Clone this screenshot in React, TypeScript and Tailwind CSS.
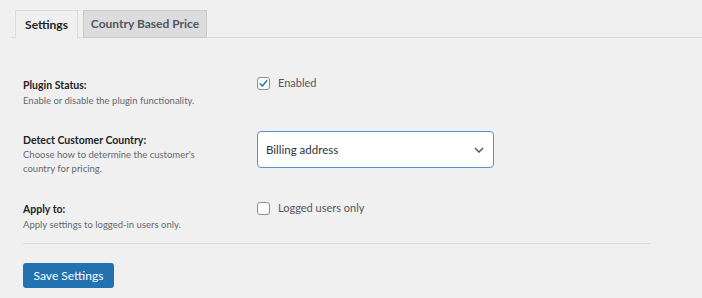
import React from "react";

function Check({ checked }: { checked?: boolean }) {
  return (
    <span className="relative flex h-[13px] w-[13px] shrink-0 items-center justify-center rounded-[3px] border border-[#8c8f94] bg-white">
      {checked && (
        <svg width="11" height="11" viewBox="0 0 20 20" className="absolute">
          <path d="M4 10.5 L8 14.5 L16 5" fill="none" stroke="#2271b1" strokeWidth="2.6" strokeLinecap="round" strokeLinejoin="round" />
        </svg>
      )}
    </span>
  );
}

export default function App() {
  return (
    <div
      className="w-[702px] h-[298px] overflow-hidden bg-[#f0f0f1] text-[#1d2327]"
      style={{ fontFamily: "Lato, 'Noto Sans', sans-serif" }}
    >
      <div className="ml-[11px] flex h-[38px] items-end gap-[5px] border-b border-[#dcdcde] pl-[4px]">
        <div className="-mb-px flex h-[28px] w-[63px] items-center justify-center border border-b-0 border-[#dcdcde] bg-[#f0f0f1] text-[12px] font-bold text-[#1d2327]">
          Settings
        </div>
        <div className="-mb-px flex h-[28px] w-[124px] items-center justify-center border border-[#c9c9cb] bg-[#dcdcde] text-[12px] font-bold text-[#50575e]">
          Country Based Price
        </div>
      </div>

      <div className="pl-[23px] pr-[51px]">
        <div className="mt-[39px] flex h-[54px]">
          <div className="w-[234px] shrink-0">
            <div className="text-[10.5px] font-bold leading-[16px]">Plugin Status:</div>
            <div className="text-[9.5px] leading-[15px] text-[#646970]">Enable or disable the plugin functionality.</div>
          </div>
          <div className="flex h-[13px] items-center gap-[8px]">
            <Check checked />
            <span className="text-[11px] text-[#50575e]">Enabled</span>
          </div>
        </div>

        <div className="flex h-[70px]">
          <div className="w-[234px] shrink-0 pt-[1px]">
            <div className="text-[10.5px] font-bold leading-[16px]">Detect Customer Country:</div>
            <div className="w-[180px] text-[9.5px] leading-[14px] text-[#646970]">
              Choose how to determine the customer's country for pricing.
            </div>
          </div>
          <div className="flex h-[37px] w-[237px] items-center justify-between rounded-[4px] border border-[#4f94d4] bg-white pl-[8px] pr-[9px]">
            <span className="text-[11.5px] text-[#2c3338]">Billing address</span>
            <svg width="10" height="6" viewBox="0 0 10 6">
              <path d="M1 1 L5 5 L9 1" fill="none" stroke="#50575e" strokeWidth="1.5" />
            </svg>
          </div>
        </div>

        <div className="flex h-[43px] border-b border-[#dcdcde]">
          <div className="w-[234px] shrink-0">
            <div className="text-[10.5px] font-bold leading-[16px]">Apply to:</div>
            <div className="text-[9.5px] leading-[15px] text-[#646970]">Apply settings to logged-in users only.</div>
          </div>
          <div className="mt-[1px] flex h-[13px] items-center gap-[8px]">
            <Check />
            <span className="text-[11px] text-[#50575e]">Logged users only</span>
          </div>
        </div>

        <button className="mt-[19px] flex h-[25px] w-[91px] items-center justify-center rounded-[3px] bg-[#2271b1] text-[12px] text-white">
          Save Settings
        </button>
      </div>
    </div>
  );
}
